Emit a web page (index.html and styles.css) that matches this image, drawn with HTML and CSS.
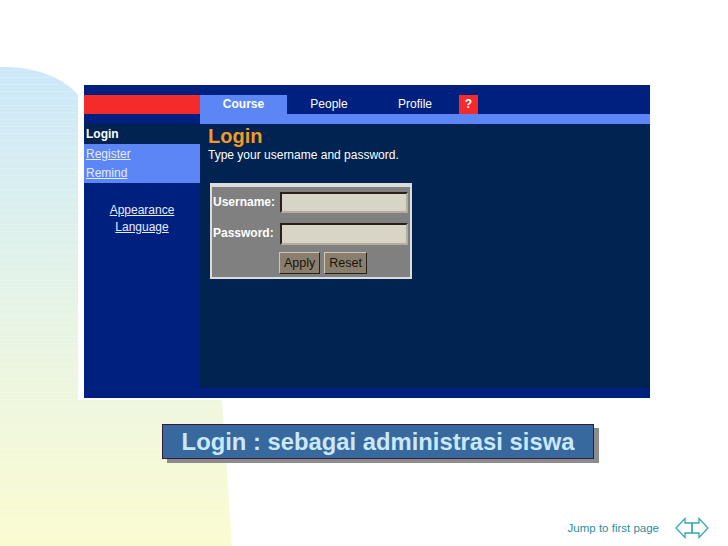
FILE: index.html
```html
<!DOCTYPE html>
<html lang="en">

<head>
    <meta charset="UTF-8">
    <meta name="viewport" content="width=device-width, initial-scale=1.0">
    <title>Login : sebagai administrasi siswa</title>
    <link rel="stylesheet" href="styles.css">
</head>

<body>
    <div class="slide">
        <!-- background shape of the slide -->
        <svg class="deco" width="728" height="546" viewBox="0 0 728 546">
            <defs>
                <linearGradient id="fade" x1="0" y1="0" x2="0" y2="1">
                    <stop offset="0" stop-color="#cbe8fa" />
                    <stop offset="0.5" stop-color="#e6f4e6" />
                    <stop offset="1" stop-color="#fbfbd0" />
                </linearGradient>
                <pattern id="lines" width="8" height="7" patternUnits="userSpaceOnUse">
                    <rect x="0" y="0" width="8" height="1" fill="#ffffff" opacity="0.18" />
                </pattern>
            </defs>
            <path d="M0 67 C30 66 65 75 82 100 L222 402 L232 546 L0 546 Z" fill="url(#fade)" />
            <path d="M0 67 C30 66 65 75 82 100 L222 402 L232 546 L0 546 Z" fill="url(#lines)" />
        </svg>

        <div class="shot">
            <div class="app">
                <div class="topbar"></div>
                <div class="tabrow">
                    <div class="brand"></div>
                    <div class="tab active">Course</div>
                    <div class="tab people">People</div>
                    <div class="tab profile">Profile</div>
                    <div class="help">?</div>
                </div>
                <div class="strip">
                    <div class="strip-left"></div>
                    <div class="strip-right"></div>
                </div>
                <div class="app-body">
                    <div class="side">
                        <div class="side-login">Login</div>
                        <div class="side-links">
                            <a href="javascript:;">Register</a>
                            <a href="javascript:;">Remind</a>
                        </div>
                        <div class="side-extra">
                            <a href="javascript:;">Appearance</a>
                            <a href="javascript:;">Language</a>
                        </div>
                    </div>
                    <div class="main">
                        <h1 class="main-title">Login</h1>
                        <p class="main-hint">Type your username and password.</p>
                        <div class="login-box">
                            <label>Username:</label>
                            <input type="text" class="field">
                            <label>Password:</label>
                            <input type="password" class="field tall">
                            <div class="buttons">
                                <button class="btn">Apply</button>
                                <button class="btn">Reset</button>
                            </div>
                        </div>
                    </div>
                </div>
            </div>
        </div>

        <div class="caption">Login : sebagai administrasi siswa</div>

        <div class="footer">
            <a href="javascript:;" class="jump">Jump to first page</a>
            <svg class="arrows" width="36" height="22" viewBox="0 0 36 22">
                <polygon points="1,11 10,1.5 10,6 17,6 17,16 10,16 10,20.5" fill="none" stroke="#3aa6b6" stroke-width="1.3" />
                <polygon points="17,6 24,6 24,1.5 33,11 24,20.5 24,16 17,16" fill="none" stroke="#3aa6b6" stroke-width="1.3" />
            </svg>
        </div>
    </div>
</body>

</html>
```

FILE: styles.css
```css
* {
    margin: 0;
    padding: 0;
    box-sizing: border-box;
}

body {
    background: #ffffff;
    font-family: "Liberation Sans", Arial, sans-serif;
}

a {
    text-decoration: none;
}

.slide {
    position: relative;
    width: 728px;
    height: 546px;
    overflow: hidden;
}

.deco {
    position: absolute;
    left: 0;
    top: 0;
    z-index: 0;
}

/* screenshot of the course site */
.shot {
    position: relative;
    z-index: 1;
    width: 572px;
    margin: 79px 0 0 78px;
    padding: 6px 0 2px 6px;
    background: #ffffff;
}

.app {
    width: 566px;
    height: 313px;
    background: #00207f;
    color: #ffffff;
    font-size: 12px;
}

.topbar {
    height: 10px;
}

.tabrow {
    display: flex;
    height: 19px;
}

.brand {
    width: 116px;
    background: #f52a2a;
}

.tab {
    line-height: 19px;
    text-align: center;
}

.tab.active {
    width: 87px;
    background: #5c86f6;
    font-weight: bold;
}

.tab.people {
    width: 84px;
}

.tab.profile {
    width: 88px;
}

.help {
    width: 19px;
    background: #f52a2a;
    font-weight: bold;
    text-align: center;
    line-height: 19px;
}

.strip {
    display: flex;
    height: 10px;
}

.strip-left {
    width: 116px;
}

.strip-right {
    flex: 1;
    background: #5c86f6;
}

.app-body {
    display: flex;
    height: 274px;
}

.side {
    width: 116px;
}

.side-login {
    height: 20px;
    line-height: 20px;
    padding-left: 2px;
    background: #002352;
    font-weight: bold;
}

.side-links {
    height: 39px;
    background: #5c86f6;
    padding-top: 1px;
}

.side-links a,
.side-extra a {
    display: block;
    color: #e6ecff;
    text-decoration: underline;
    height: 19px;
    line-height: 19px;
}

.side-links a {
    padding-left: 2px;
}

.side-extra {
    padding-top: 19px;
    text-align: center;
}

.side-extra a {
    height: 17px;
    line-height: 17px;
}

.main {
    flex: 1;
    height: 264px;
    background: #002352;
    padding-left: 8px;
}

.main-title {
    font-size: 20px;
    line-height: 24px;
    color: #f39a22;
    font-weight: bold;
}

.main-hint {
    font-size: 12px;
    line-height: 15px;
}

.login-box {
    display: grid;
    grid-template-columns: 68px 128px;
    grid-template-rows: 21px 22px 22px;
    row-gap: 10px;
    width: 202px;
    margin: 20px 0 0 2px;
    padding: 5px 2px 0 0;
    background: #808080;
    border: 2px solid #dcdcdc;
    border-top-width: 4px;
}

.login-box label {
    font-weight: bold;
    padding-left: 1px;
    line-height: 21px;
}

.field {
    width: 128px;
    height: 21px;
    background: #d8d4c6;
    border: 2px solid #b4ac9c;
    border-top-color: #2a2218;
    border-left-color: #2a2218;
    outline: none;
}

.field.tall {
    height: 22px;
}

.buttons {
    grid-column: 2;
    display: flex;
    gap: 4px;
    margin-top: -3px;
    margin-left: -1px;
}

.btn {
    height: 22px;
    padding: 0 4px;
    background: #8a7e6e;
    border: 1px solid #2a2218;
    border-top-color: #cfc6b4;
    border-left-color: #cfc6b4;
    font-family: "Liberation Sans", Arial, sans-serif;
    font-size: 12.5px;
    color: #1c140c;
}

/* slide caption */
.caption {
    position: relative;
    z-index: 1;
    width: 432px;
    height: 35px;
    margin: 24px 0 0 162px;
    background: #37699e;
    border: 1px solid #3a1838;
    box-shadow: 5px 4px 0 #8c8c8c;
    color: #cbe8fb;
    font-size: 23.8px;
    font-weight: bold;
    line-height: 33px;
    text-align: center;
}

.footer {
    display: flex;
    align-items: center;
    justify-content: flex-end;
    gap: 16px;
    margin-top: 58px;
    padding-right: 17px;
}

.jump {
    font-size: 11.5px;
    color: #2a8ea0;
}
```
